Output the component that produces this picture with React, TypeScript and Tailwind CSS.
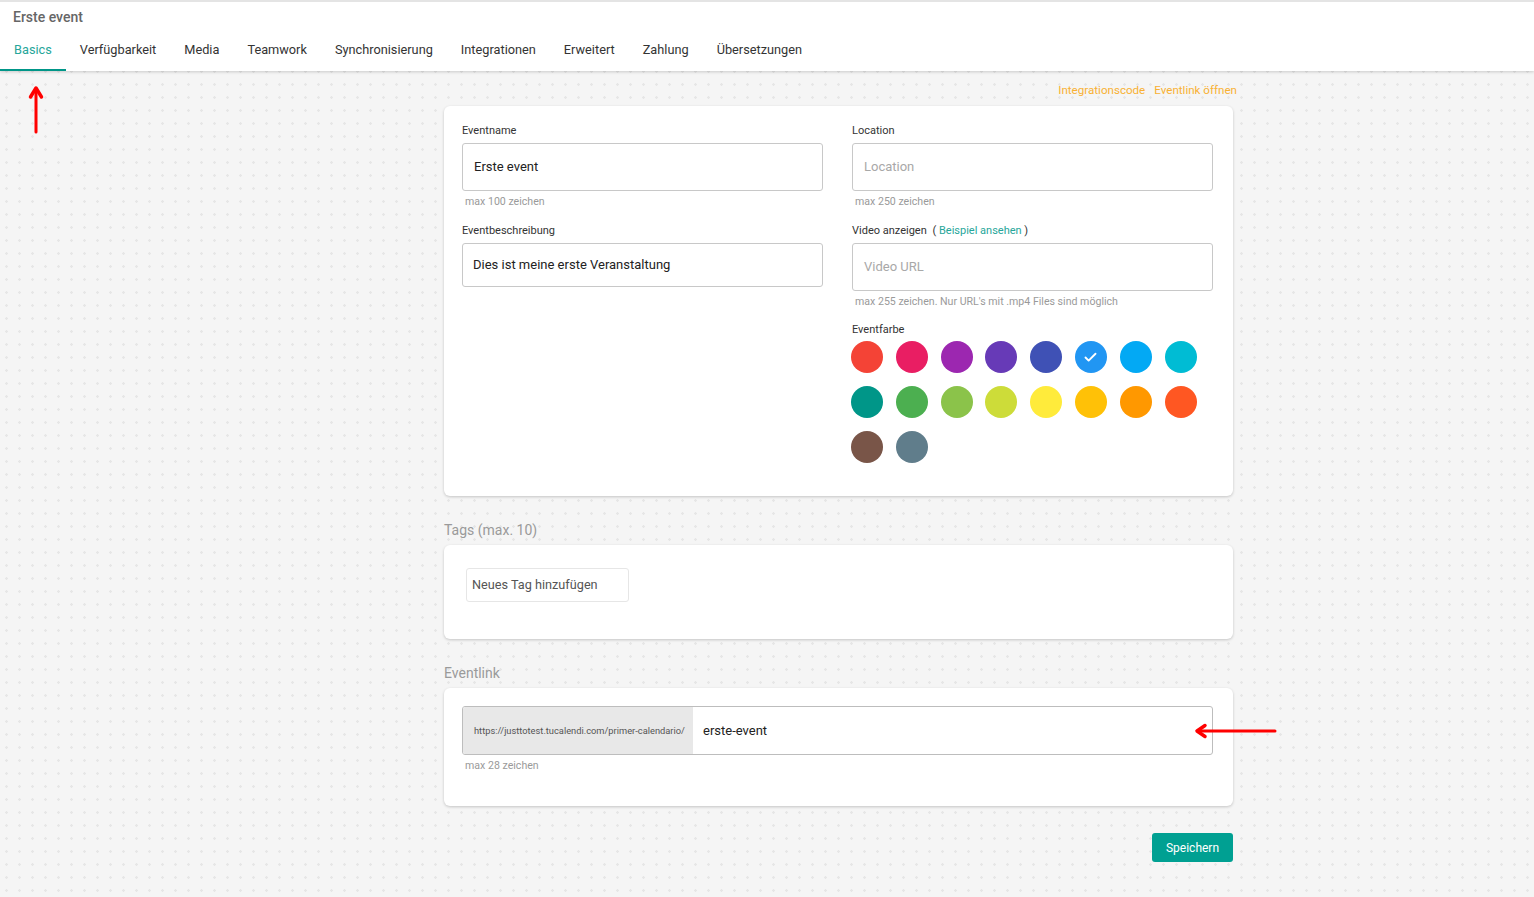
import { Check } from "lucide-react"

const tabs = [
  "Basics",
  "Verfügbarkeit",
  "Media",
  "Teamwork",
  "Synchronisierung",
  "Integrationen",
  "Erweitert",
  "Zahlung",
  "Übersetzungen",
]

const colors = [
  "#f44336", "#e91e63", "#9c27b0", "#673ab7", "#3f51b5", "#2196f3", "#03a9f4", "#00bcd4",
  "#009688", "#4caf50", "#8bc34a", "#cddc39", "#ffeb3b", "#ffc107", "#ff9800", "#ff5722",
  "#795548", "#607d8b",
]

function Label({ children }: { children: React.ReactNode }) {
  return <div className="text-[11px] leading-[14px] text-[#333] mb-[5px]">{children}</div>
}

function Help({ children }: { children: React.ReactNode }) {
  return <div className="text-[10.6px] leading-[12px] text-[#9a9a9a] mt-[5px] pl-[3px]">{children}</div>
}

export default function App() {
  return (
    <div className="relative min-h-screen bg-[#f5f5f5] bg-[radial-gradient(circle,#e6e6e6_1px,transparent_1.5px)] bg-[length:13px_13px] font-['Roboto',sans-serif] pb-[35px]">
      {/* header */}
      <div className="bg-white border-t-2 border-[#e4e4e4] shadow-[0_1px_3px_rgba(0,0,0,0.18)]">
        <div className="pt-[5px] pb-[3px] pl-[13px] text-[14px] leading-[20px] font-medium text-[#666]">
          Erste event
        </div>
        <div className="flex">
          {tabs.map((t, i) => (
            <div
              key={t}
              className={
                i === 0
                  ? "px-[14px] pt-[12px] pb-[11px] text-[12.75px] leading-[16px] border-b-2 border-[#009688] text-[#26a69a]"
                  : "px-[14px] pt-[12px] pb-[11px] text-[12.75px] leading-[16px] border-b-2 border-transparent text-[#333]"
              }
            >
              {t}
            </div>
          ))}
        </div>
      </div>

      <div className="ml-[444px] w-[789px]">
        <div className="flex justify-end gap-[9px] mt-[12px] mr-[-4px] text-[11.6px] leading-[14px] text-[#f8b133]">
          <span>Integrationscode</span>
          <span>Eventlink öffnen</span>
        </div>

        {/* basics card */}
        <div className="mt-[9px] bg-white rounded-[6px] shadow-[0_1px_3px_rgba(0,0,0,0.2)] pt-[18px] pb-[33px] pl-[18px] pr-[20px] grid grid-cols-2 gap-x-[29px]">
          <div>
            <Label>Eventname</Label>
            <div className="h-[48px] border border-[#c8c8c8] rounded-[3px] flex items-center pl-[11px] text-[13px] text-[#222]">
              Erste event
            </div>
            <Help>max 100 zeichen</Help>
            <div className="mt-[16px]">
              <Label>Eventbeschreibung</Label>
              <div className="h-[44px] border border-[#c8c8c8] rounded-[3px] flex items-center pl-[10px] text-[13px] text-[#222]">
                Dies ist meine erste Veranstaltung
              </div>
            </div>
          </div>
          <div>
            <Label>Location</Label>
            <div className="h-[48px] border border-[#c8c8c8] rounded-[3px] flex items-center pl-[11px] text-[13px] text-[#a8a8a8]">
              Location
            </div>
            <Help>max 250 zeichen</Help>
            <div className="mt-[16px]">
              <Label>
                Video anzeigen <span className="ml-[3px]">(</span>{" "}
                <span className="text-[#26a69a]">Beispiel ansehen</span> )
              </Label>
              <div className="h-[48px] border border-[#c8c8c8] rounded-[3px] flex items-center pl-[11px] text-[13px] text-[#a8a8a8]">
                Video URL
              </div>
              <Help>max 255 zeichen. Nur URL's mit .mp4 Files sind möglich</Help>
            </div>
            <div className="mt-[15px]">
              <div className="text-[11px] leading-[14px] text-[#333] mb-[4px]">Eventfarbe</div>
              <div className="grid grid-cols-[repeat(8,32px)] gap-x-[12.8px] gap-y-[13px] -ml-[1px]">
                {colors.map((c, i) => (
                  <div
                    key={c}
                    className="w-[32px] h-[32px] rounded-full flex items-center justify-center"
                    style={{ backgroundColor: c }}
                  >
                    {i === 5 && <Check size={15} strokeWidth={3} color="#fff" />}
                  </div>
                ))}
              </div>
            </div>
          </div>
        </div>

        {/* tags */}
        <div className="mt-[25px] mb-[6px] text-[14px] leading-[18px] text-[#9a9a9a]">Tags (max. 10)</div>
        <div className="bg-white rounded-[6px] shadow-[0_1px_3px_rgba(0,0,0,0.2)] pt-[23px] pb-[37px] pl-[22px]">
          <div className="w-[163px] h-[34px] border border-[#e6e6e6] rounded-[3px] flex items-center pl-[5px] text-[12.7px] text-[#555]">
            Neues Tag hinzufügen
          </div>
        </div>

        {/* eventlink */}
        <div className="mt-[25px] mb-[6px] text-[14px] leading-[18px] text-[#9a9a9a]">Eventlink</div>
        <div className="bg-white rounded-[6px] shadow-[0_1px_3px_rgba(0,0,0,0.2)] pt-[18px] pb-[34px] pl-[18px] pr-[20px]">
          <div className="h-[49px] border border-[#bdbdbd] rounded-[3px] flex overflow-hidden">
            <div className="w-[230px] bg-[#e8e8e8] flex items-center pl-[11px] text-[9.3px] text-[#555]">
              https://justtotest.tucalendi.com/primer-calendario/
            </div>
            <div className="flex items-center pl-[10px] text-[13px] text-[#222]">erste-event</div>
          </div>
          <Help>max 28 zeichen</Help>
        </div>

        <div className="flex justify-end mt-[27px]">
          <div className="w-[81px] h-[29px] bg-[#00a092] rounded-[3px] flex items-center justify-center text-[12px] text-white">
            Speichern
          </div>
        </div>
      </div>

      {/* annotation arrows */}
      <svg className="absolute left-[26px] top-[84px]" width="20" height="52" viewBox="0 0 20 52">
        <path d="M10 48 L10 8" stroke="#f00" strokeWidth="3" strokeLinecap="round" fill="none" />
        <path d="M4.5 13 L10 4 L15.5 13" stroke="#f00" strokeWidth="3.5" strokeLinecap="round" strokeLinejoin="round" fill="none" />
      </svg>
      <svg className="absolute left-[1192px] top-[721px]" width="88" height="20" viewBox="0 0 88 20">
        <path d="M8 10 L83 10" stroke="#f00" strokeWidth="3" strokeLinecap="round" fill="none" />
        <path d="M13 4.5 L5 10 L13 15.5" stroke="#f00" strokeWidth="3.5" strokeLinecap="round" strokeLinejoin="round" fill="none" />
      </svg>
    </div>
  )
}
